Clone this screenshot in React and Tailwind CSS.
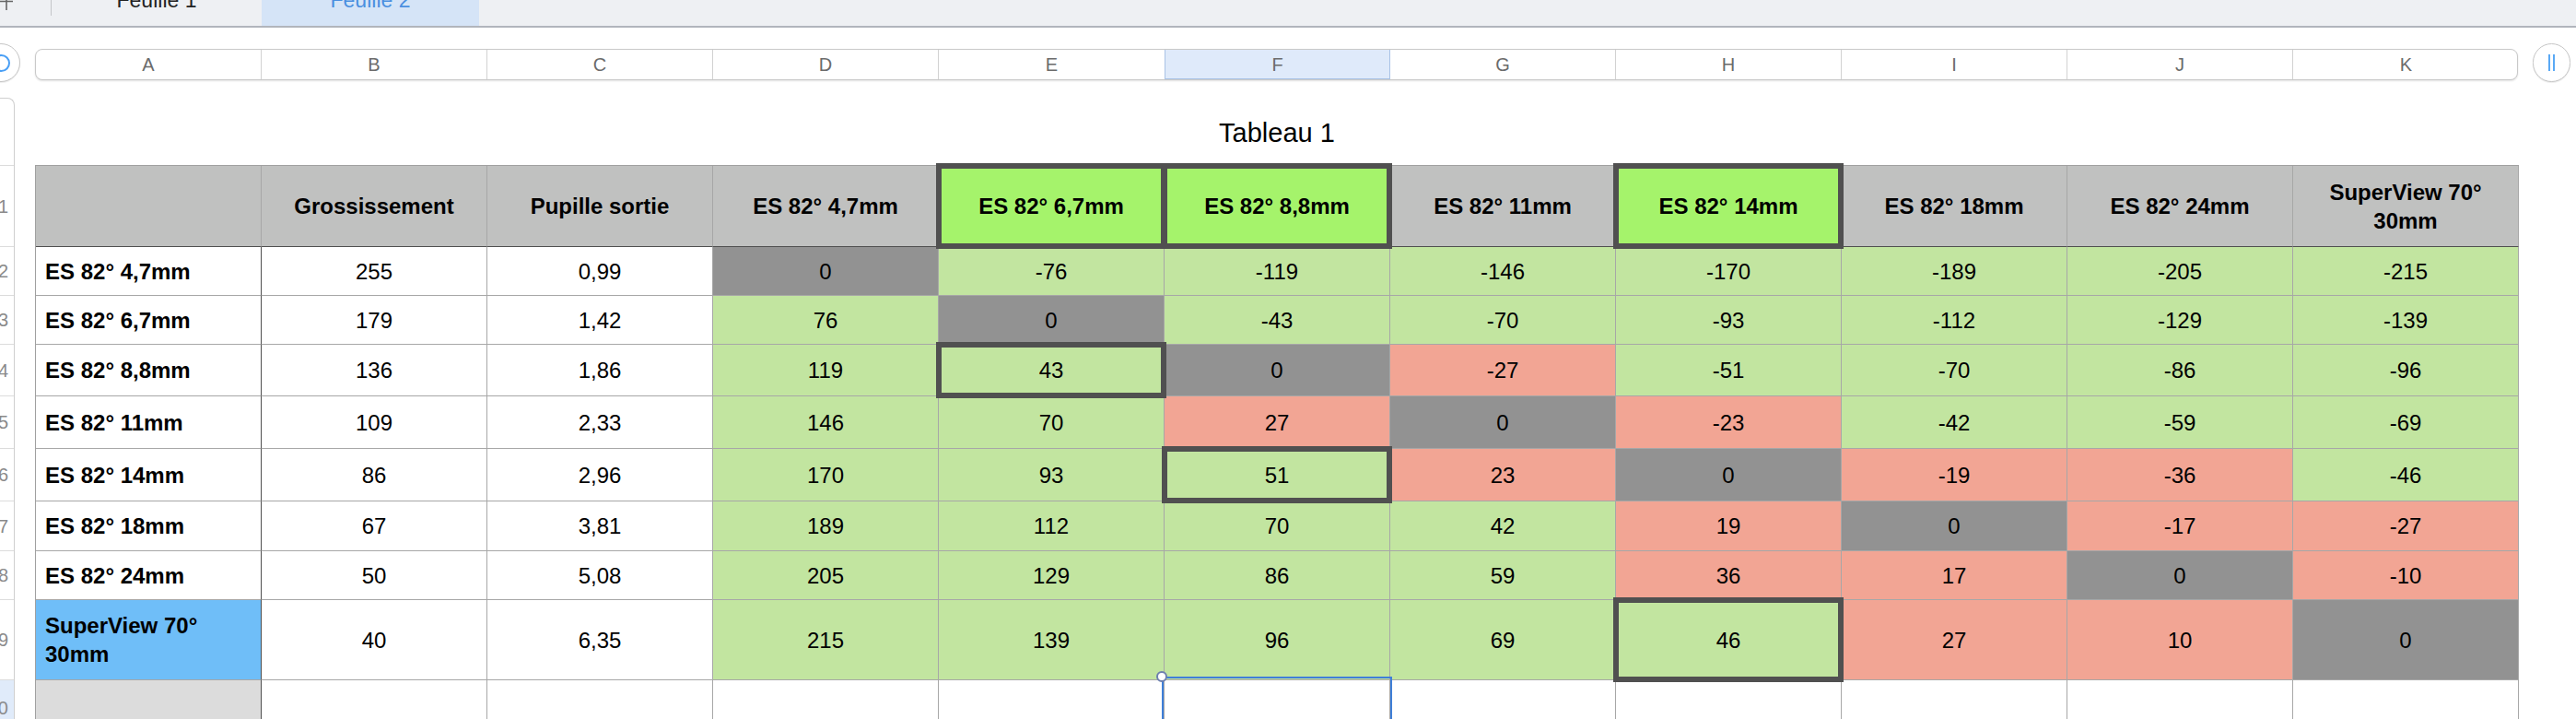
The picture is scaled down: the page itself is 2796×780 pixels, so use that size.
import React from "react";

const COLS = ["A", "B", "C", "D", "E", "F", "G", "H", "I", "J", "K"];

const HEADERS = [
  { label: "", fill: "bg-[#c0c1c0]" },
  { label: "Grossissement", fill: "bg-[#c0c1c0]" },
  { label: "Pupille sortie", fill: "bg-[#c0c1c0]" },
  { label: "ES 82° 4,7mm", fill: "bg-[#c0c1c0]" },
  { label: "ES 82° 6,7mm", fill: "bg-[#a5f36b]", thick: true },
  { label: "ES 82° 8,8mm", fill: "bg-[#a5f36b]", thick: true },
  { label: "ES 82° 11mm", fill: "bg-[#c0c1c0]" },
  { label: "ES 82° 14mm", fill: "bg-[#a5f36b]", thick: true },
  { label: "ES 82° 18mm", fill: "bg-[#c0c1c0]" },
  { label: "ES 82° 24mm", fill: "bg-[#c0c1c0]" },
  { label: "SuperView 70° 30mm", fill: "bg-[#c0c1c0]" },
];

// name, grossissement, pupille, differences D..K, fill codes D..K, thick column index
const ROWS = [
  { name: "ES 82° 4,7mm", g: 255, p: "0,99", v: [0, -76, -119, -146, -170, -189, -205, -215], fills: "xggggggg" },
  { name: "ES 82° 6,7mm", g: 179, p: "1,42", v: [76, 0, -43, -70, -93, -112, -129, -139], fills: "gxgggggg" },
  { name: "ES 82° 8,8mm", g: 136, p: "1,86", v: [119, 43, 0, -27, -51, -70, -86, -96], fills: "ggxsgggg", thick: 4 },
  { name: "ES 82° 11mm", g: 109, p: "2,33", v: [146, 70, 27, 0, -23, -42, -59, -69], fills: "ggsxsggg" },
  { name: "ES 82° 14mm", g: 86, p: "2,96", v: [170, 93, 51, 23, 0, -19, -36, -46], fills: "gggsxssg", thick: 5 },
  { name: "ES 82° 18mm", g: 67, p: "3,81", v: [189, 112, 70, 42, 19, 0, -17, -27], fills: "ggggsxss" },
  { name: "ES 82° 24mm", g: 50, p: "5,08", v: [205, 129, 86, 59, 36, 17, 0, -10], fills: "ggggssxs" },
  { name: "SuperView 70° 30mm", g: 40, p: "6,35", v: [215, 139, 96, 69, 46, 27, 10, 0], fills: "gggggssx", thick: 7, blue: true },
];

const FILL = {
  g: "bg-[#c2e5a0]",
  s: "bg-[#f2a594]",
  x: "bg-[#929292]",
};

const ROW_H = [88, 53, 53, 56, 57, 57, 54, 53, 87, 60];

function Thick() {
  return <div className="absolute -inset-[3px] border-[6px] border-[#505050] z-10 pointer-events-none" />;
}

function Cell({ children, className = "", thick, align = "center" }) {
  return (
    <div
      className={`relative border-r border-b border-[#a7a7a7] flex items-center ${
        align === "left" ? "justify-start pl-[10px]" : "justify-center text-center px-[10px]"
      } ${className}`}
    >
      {children}
      {thick && <Thick />}
    </div>
  );
}

function ColumnBar() {
  return (
    <div className="flex w-[2695px] h-[34px] rounded-[8px] border border-[#c9c9c9] bg-white shadow-[0_1px_2px_rgba(0,0,0,0.12)] overflow-hidden">
      {COLS.map((c, i) => (
        <div
          key={c}
          className={`w-[245px] shrink-0 flex items-center justify-center text-[20px] text-[#6b6b6b] ${
            c === "F"
              ? "bg-[#dfeafa] border-x border-b border-[#a9c3e6]"
              : i < COLS.length - 1 && COLS[i + 1] !== "F"
              ? "border-r border-[#d2d2d2]"
              : ""
          }`}
        >
          {c}
        </div>
      ))}
    </div>
  );
}

function RowHeaders() {
  return (
    <div className="w-[16px] shrink-0 mt-[17px] flex flex-col border-t border-r border-[#cfcfcf] rounded-tr-[8px] bg-white">
      <div className="h-[73px] border-b border-[#dcdcdc]" />
      {ROW_H.map((h, i) => (
        <div
          key={i}
          style={{ height: h }}
          className={`flex items-center justify-end pr-[6px] text-[20px] text-[#8a8a8a] border-b border-[#dcdcdc] whitespace-nowrap ${
            i === 9 ? "bg-[#e0ebfa]" : ""
          }`}
        >
          {i + 1}
        </div>
      ))}
    </div>
  );
}

export default function App() {
  return (
    <div className="w-[2796px] h-[780px] overflow-hidden bg-white font-['Liberation_Sans',Arial,sans-serif] text-black">
      {/* sheet tabs */}
      <div className="flex items-start h-[30px] bg-[#eef0f3] border-b-2 border-[#b1b5bc]">
        <div className="w-[55px] h-[28px] shrink-0">
          <svg width="20" height="14" viewBox="0 0 20 14" className="block">
            <path d="M0 1.5H14M7 0V11" stroke="#666" strokeWidth="1.6" fill="none" />
          </svg>
        </div>
        <div className="w-[1px] h-[17px] bg-[#c4c6ca]" />
        <div className="w-[228px] h-[28px] flex justify-center">
          <span className="-mt-[12px] leading-[24px] text-[23px] text-[#222]">Feuille 1</span>
        </div>
        <div className="w-[236px] h-[28px] flex justify-center bg-[#d5e4f7]">
          <span className="-mt-[12px] leading-[24px] text-[23px] text-[#4a8fe0]">Feuille 2</span>
        </div>
      </div>

      {/* column letters */}
      <div className="flex items-center h-[42px] mt-[17px]">
        <div className="w-[42px] h-[42px] -ml-[20px] shrink-0 rounded-full border border-[#c6c6c6] bg-white flex items-center justify-center shadow-[0_1px_1px_rgba(0,0,0,0.08)]">
          <div className="w-[19px] h-[19px] rounded-full border-2 border-[#4a9ff5]" />
        </div>
        <div className="ml-[16px] mt-[4px]">
          <ColumnBar />
        </div>
        <div className="ml-[16px] w-[41px] h-[42px] shrink-0 rounded-full border border-[#c6c6c6] bg-white flex items-center justify-center gap-[3px] shadow-[0_1px_1px_rgba(0,0,0,0.08)]">
          <div className="w-[2px] h-[18px] bg-[#5aa9f5]" />
          <div className="w-[2px] h-[18px] bg-[#5aa9f5]" />
        </div>
      </div>

      <div className="flex">
        <RowHeaders />

        <div className="ml-[22px] mt-[17px]">
          {/* title */}
          <div className="h-[73px] flex items-center justify-center pt-[4px] text-[29px]">Tableau 1</div>

          {/* table */}
          <div className="grid grid-cols-[repeat(11,245px)] grid-rows-[88px_53px_53px_56px_57px_57px_54px_53px_87px_60px] border-l border-t border-[#a0a0a0] text-[24px] leading-[31px]">
            {HEADERS.map((h, i) => (
              <Cell key={"h" + i} className={`${h.fill} font-bold border-b-[#4f4f4f]`} thick={h.thick}>
                {h.label}
              </Cell>
            ))}

            {ROWS.map((r) => (
              <React.Fragment key={r.name}>
                <Cell
                  align="left"
                  className={`font-bold border-r-[#4f4f4f] ${r.blue ? "bg-[#6fbef8]" : "bg-white"}`}
                >
                  {r.name}
                </Cell>
                <Cell className="bg-white">{r.g}</Cell>
                <Cell className="bg-white">{r.p}</Cell>
                {r.v.map((val, ci) => (
                  <Cell key={ci} className={FILL[r.fills[ci]]} thick={r.thick === ci + 3}>
                    {val}
                  </Cell>
                ))}
              </React.Fragment>
            ))}

            {/* empty row 10 */}
            {COLS.map((c, i) => (
              <Cell
                key={"e" + c}
                className={i === 0 ? "bg-[#dcdcdc] border-r-[#4f4f4f]" : "bg-white"}
              >
                {c === "F" && (
                  <>
                    <div className="absolute -left-[3px] -top-[4px] -right-[3px] h-[80px] border-2 border-[#3f7fd8] z-20" />
                    <div className="absolute -left-[9px] -top-[10px] w-[12px] h-[12px] rounded-full bg-white border-2 border-[#6c7fae] z-30" />
                  </>
                )}
              </Cell>
            ))}
          </div>
        </div>
      </div>
    </div>
  );
}
